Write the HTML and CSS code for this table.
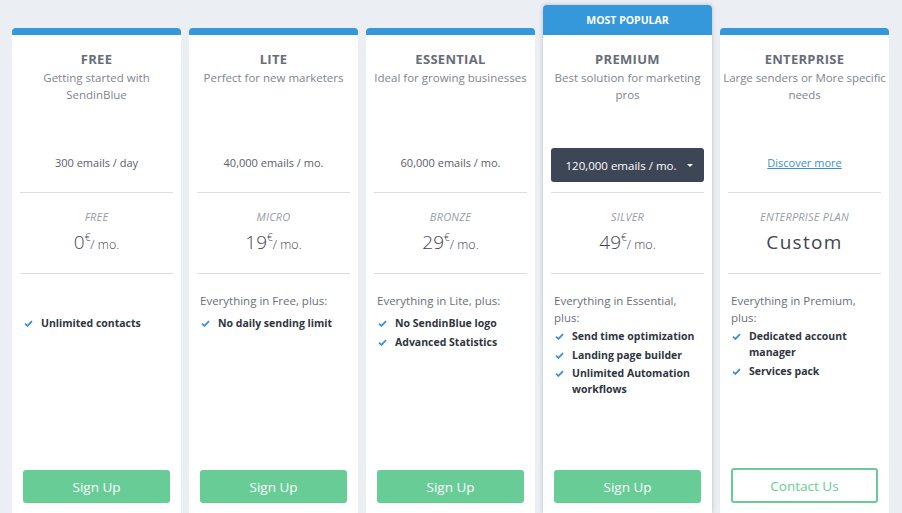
FILE: index.html
```html
<!DOCTYPE html>
<html lang="en">
<head>
<meta charset="utf-8">
<title>Pricing</title>
<link rel="stylesheet" href="styles.css">
</head>
<body>
<div class="plans">

  <div class="plan">
    <div class="plan-bar"></div>
    <div class="plan-body">
      <div class="plan-head">
        <h2 class="plan-title">FREE</h2>
        <p class="plan-desc">Getting started with SendinBlue</p>
        <div class="plan-volume"><span class="volume-text">300 emails / day</span></div>
      </div>
      <div class="plan-price">
        <div class="plan-tier">FREE</div>
        <div class="price"><span class="amount">0</span><sup class="cur">€</sup><span class="per">/ mo.</span></div>
      </div>
      <div class="plan-features">
        <p class="intro">&nbsp;</p>
        <ul class="list">
          <li><svg class="check" viewBox="0 0 10 8"><path d="M1 4.2 L3.8 6.8 L9 1.2"/></svg>Unlimited contacts</li>
        </ul>
      </div>
      <div class="plan-cta"><a class="btn btn-fill" href="#">Sign Up</a></div>
    </div>
  </div>

  <div class="plan">
    <div class="plan-bar"></div>
    <div class="plan-body">
      <div class="plan-head">
        <h2 class="plan-title">LITE</h2>
        <p class="plan-desc">Perfect for new marketers</p>
        <div class="plan-volume"><span class="volume-text">40,000 emails / mo.</span></div>
      </div>
      <div class="plan-price">
        <div class="plan-tier">MICRO</div>
        <div class="price"><span class="amount">19</span><sup class="cur">€</sup><span class="per">/ mo.</span></div>
      </div>
      <div class="plan-features">
        <p class="intro">Everything in Free, plus:</p>
        <ul class="list">
          <li><svg class="check" viewBox="0 0 10 8"><path d="M1 4.2 L3.8 6.8 L9 1.2"/></svg>No daily sending limit</li>
        </ul>
      </div>
      <div class="plan-cta"><a class="btn btn-fill" href="#">Sign Up</a></div>
    </div>
  </div>

  <div class="plan">
    <div class="plan-bar"></div>
    <div class="plan-body">
      <div class="plan-head">
        <h2 class="plan-title">ESSENTIAL</h2>
        <p class="plan-desc">Ideal for growing businesses</p>
        <div class="plan-volume"><span class="volume-text">60,000 emails / mo.</span></div>
      </div>
      <div class="plan-price">
        <div class="plan-tier">BRONZE</div>
        <div class="price"><span class="amount">29</span><sup class="cur">€</sup><span class="per">/ mo.</span></div>
      </div>
      <div class="plan-features">
        <p class="intro">Everything in Lite, plus:</p>
        <ul class="list">
          <li><svg class="check" viewBox="0 0 10 8"><path d="M1 4.2 L3.8 6.8 L9 1.2"/></svg>No SendinBlue logo</li>
          <li><svg class="check" viewBox="0 0 10 8"><path d="M1 4.2 L3.8 6.8 L9 1.2"/></svg>Advanced Statistics</li>
        </ul>
      </div>
      <div class="plan-cta"><a class="btn btn-fill" href="#">Sign Up</a></div>
    </div>
  </div>

  <div class="plan plan-popular">
    <div class="plan-bar">MOST POPULAR</div>
    <div class="plan-body">
      <div class="plan-head">
        <h2 class="plan-title">PREMIUM</h2>
        <p class="plan-desc">Best solution for marketing pros</p>
        <div class="plan-volume">
          <button class="select" type="button">120,000 emails / mo.<span class="caret"></span></button>
        </div>
      </div>
      <div class="plan-price">
        <div class="plan-tier">SILVER</div>
        <div class="price"><span class="amount">49</span><sup class="cur">€</sup><span class="per">/ mo.</span></div>
      </div>
      <div class="plan-features">
        <p class="intro intro-wrap">Everything in Essential, plus:</p>
        <ul class="list">
          <li><svg class="check" viewBox="0 0 10 8"><path d="M1 4.2 L3.8 6.8 L9 1.2"/></svg>Send time optimization</li>
          <li><svg class="check" viewBox="0 0 10 8"><path d="M1 4.2 L3.8 6.8 L9 1.2"/></svg>Landing page builder</li>
          <li><svg class="check" viewBox="0 0 10 8"><path d="M1 4.2 L3.8 6.8 L9 1.2"/></svg>Unlimited Automation workflows</li>
        </ul>
      </div>
      <div class="plan-cta"><a class="btn btn-fill" href="#">Sign Up</a></div>
    </div>
  </div>

  <div class="plan">
    <div class="plan-bar"></div>
    <div class="plan-body">
      <div class="plan-head">
        <h2 class="plan-title">ENTERPRISE</h2>
        <p class="plan-desc plan-desc-wide">Large senders or More specific needs</p>
        <div class="plan-volume"><a class="link volume-text" href="#">Discover more</a></div>
      </div>
      <div class="plan-price">
        <div class="plan-tier">ENTERPRISE PLAN</div>
        <div class="price price-custom">Custom</div>
      </div>
      <div class="plan-features">
        <p class="intro intro-wrap">Everything in Premium, plus:</p>
        <ul class="list">
          <li><svg class="check" viewBox="0 0 10 8"><path d="M1 4.2 L3.8 6.8 L9 1.2"/></svg>Dedicated account manager</li>
          <li><svg class="check" viewBox="0 0 10 8"><path d="M1 4.2 L3.8 6.8 L9 1.2"/></svg>Services pack</li>
        </ul>
      </div>
      <div class="plan-cta"><a class="btn btn-outline" href="#">Contact Us</a></div>
    </div>
  </div>

</div>
</body>
</html>
```

FILE: styles.css
```css
html, body {
  margin: 0;
  padding: 0;
  height: 100%;
  overflow: hidden;
}

body {
  background: #ebeef2;
  font-family: "Open Sans", "DejaVu Sans", sans-serif;
  color: #5b606a;
}

.plans {
  display: grid;
  grid-template-columns: repeat(5, 169px);
  column-gap: 8px;
  align-items: end;
  padding: 5px 0 0 12px;
}

.plan {
  display: flex;
  flex-direction: column;
}

.plan-bar {
  height: 7px;
  background: #3498db;
  border-radius: 4px 4px 0 0;
}

.plan-popular {
  box-shadow: 0 0 4px rgba(60, 70, 90, 0.28);
  border-radius: 4px 4px 0 0;
  position: relative;
  z-index: 1;
}

.plan-popular .plan-bar {
  height: 30px;
  display: flex;
  align-items: center;
  justify-content: center;
  color: #fff;
  font-weight: 700;
  font-size: 10.5px;
}

.plan-body {
  background: #fff;
  height: 478px;
  display: flex;
  flex-direction: column;
}

.plan-head {
  box-sizing: border-box;
  height: 158px;
  margin: 0 8px;
  border-bottom: 1px solid #d8dde3;
  display: flex;
  flex-direction: column;
  align-items: center;
  text-align: center;
}

.plan-title {
  margin: 16px 0 0;
  font-size: 13px;
  line-height: 17px;
  font-weight: 700;
  color: #676d78;
  letter-spacing: 0.3px;
}

.plan-desc {
  margin: 1px -5px 0;
  font-size: 11.5px;
  line-height: 17px;
  color: #80858e;
}

.plan-desc-wide {
  margin: 1px -8px 0;
  letter-spacing: -0.05px;
}

.plan-volume {
  margin-top: auto;
  margin-bottom: 10px;
  height: 34px;
  align-self: stretch;
  display: flex;
  align-items: center;
  justify-content: center;
  font-size: 11px;
  color: #5b606a;
}

.volume-text {
  margin-bottom: 5px;
}

.select {
  width: 100%;
  height: 34px;
  margin: 0 -1px;
  border: 0;
  border-radius: 3px;
  background: #3d4656;
  color: #fff;
  font-family: inherit;
  font-size: 11.5px;
  display: flex;
  align-items: center;
  justify-content: center;
  padding: 0 0 0 4px;
}

.caret {
  display: inline-block;
  width: 0;
  height: 0;
  margin-left: 11px;
  border-left: 3px solid transparent;
  border-right: 3px solid transparent;
  border-top: 3px solid #fff;
}

.link {
  color: #3a8fd8;
  text-decoration: underline;
  font-size: 11px;
}

.plan-price {
  box-sizing: border-box;
  height: 81px;
  margin: 0 8px;
  padding-top: 16px;
  border-bottom: 1px solid #d8dde3;
  text-align: center;
}

.plan-tier {
  font-size: 11px;
  line-height: 16px;
  font-style: italic;
  color: #979ca5;
  letter-spacing: 0.2px;
}

.price {
  margin-top: 3px;
  line-height: 28px;
  color: #3f4552;
  font-weight: 300;
}

.amount {
  font-size: 19px;
}

.cur {
  font-size: 10px;
  vertical-align: 8px;
  line-height: 0;
}

.per {
  font-size: 12.5px;
}

.price-custom {
  font-size: 19px;
  font-weight: 400;
  letter-spacing: 1.3px;
}

.plan-features {
  flex: 1;
  padding: 18px 11px 0;
}

.intro {
  margin: 0 0 6px;
  font-size: 11.5px;
  line-height: 17px;
  color: #6a6f78;
}

.intro-wrap {
  margin-bottom: 2px;
}

.list {
  list-style: none;
  margin: 0;
  padding: 0;
}

.list li {
  display: flex;
  align-items: flex-start;
  font-size: 10.5px;
  line-height: 16px;
  font-weight: 700;
  color: #2f3540;
  margin-bottom: 2.5px;
}

.check {
  flex: none;
  width: 9px;
  height: 7px;
  margin: 5px 8px 0 1px;
  fill: none;
  stroke: #3b8fd9;
  stroke-width: 2;
}

.plan-cta {
  padding: 0 11px 10px;
}

.btn {
  box-sizing: border-box;
  display: flex;
  align-items: center;
  justify-content: center;
  height: 33px;
  border-radius: 3px;
  font-size: 13.5px;
  text-decoration: none;
}

.btn-fill {
  background: #68cc96;
  color: #fff;
}

.btn-outline {
  height: 35px;
  border: 2px solid #68cc96;
  background: #fff;
  color: #68cc96;
}
```
